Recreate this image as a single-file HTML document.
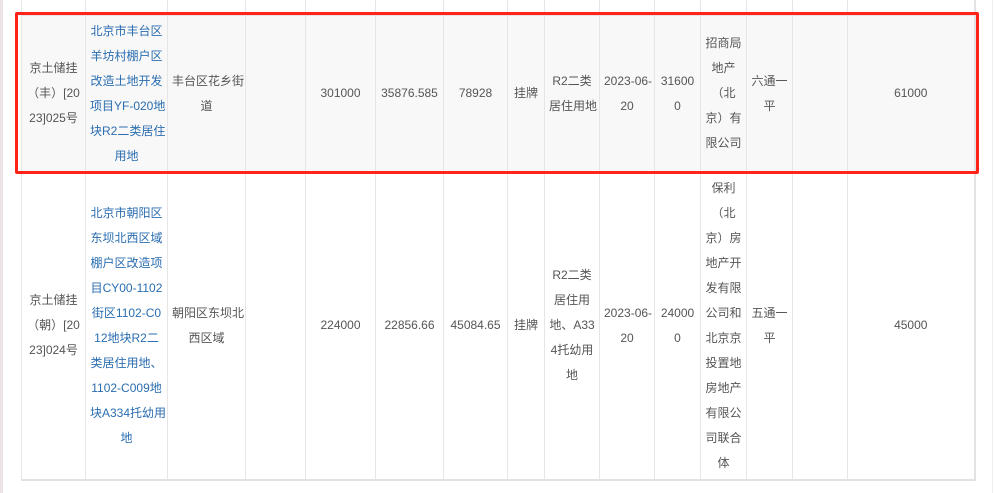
<!DOCTYPE html>
<html><head><meta charset="utf-8"><style>
html,body{margin:0;padding:0;background:#fff;width:994px;height:493px;overflow:hidden;position:relative;font-family:"Liberation Sans","Noto Sans CJK SC",sans-serif;}
.lstrip{position:absolute;left:0;top:0;width:3px;height:493px;background:#ece4e4;}
.rstrip{position:absolute;left:992px;top:0;width:1px;height:493px;background:#eee;}
table{position:absolute;left:21px;top:-11px;border-collapse:collapse;table-layout:fixed;width:953px;border-right:2px solid #e2e2e2;border-bottom:2px solid #e2e2e2;}
td{border:1px solid #e6e6e6;padding:0 4px;text-align:center;vertical-align:middle;font-size:12px;line-height:25px;color:#555;overflow:hidden;white-space:nowrap;}
td a{color:#2a6db0;text-decoration:none;}
tr.r1 td{background:#f8f8f8;height:155px;}
tr.r2 td{height:307px;}
tr.r0 td{height:25px;}
.box{position:absolute;left:15px;top:12px;width:958px;height:156px;border:3px solid #ff2318;border-radius:2px;}
</style></head><body>
<div class="lstrip"></div><div class="rstrip"></div>
<table>
<colgroup><col style="width:64px"><col style="width:82px"><col style="width:78px"><col style="width:60px"><col style="width:70px"><col style="width:68px"><col style="width:64px"><col style="width:37px"><col style="width:55px"><col style="width:55px"><col style="width:46px"><col style="width:46px"><col style="width:46px"><col style="width:55px"><col style="width:127px"></colgroup>
<tr class="r0"><td></td><td></td><td></td><td></td><td></td><td></td><td></td><td></td><td></td><td></td><td></td><td></td><td></td><td></td><td></td></tr>
<tr class="r1">
<td>京土储挂<br>（丰）[20<br>23]025号</td>
<td><a>北京市丰台区<br>羊坊村棚户区<br>改造土地开发<br>项目YF-020地<br>块R2二类居住<br>用地</a></td>
<td>丰台区花乡街<br>道</td>
<td></td>
<td>301000</td>
<td>35876.585</td>
<td>78928</td>
<td>挂牌</td>
<td>R2二类<br>居住用地</td>
<td>2023-06-<br>20</td>
<td>31600<br>0</td>
<td>招商局<br>地产<br>（北<br>京）有<br>限公司</td>
<td>六通一<br>平</td>
<td></td>
<td>61000</td>
</tr>
<tr class="r2">
<td>京土储挂<br>（朝）[20<br>23]024号</td>
<td><a>北京市朝阳区<br>东坝北西区域<br>棚户区改造项<br>目CY00-1102<br>街区1102-C0<br>12地块R2二<br>类居住用地、<br>1102-C009地<br>块A334托幼用<br>地</a></td>
<td>朝阳区东坝北<br>西区域</td>
<td></td>
<td>224000</td>
<td>22856.66</td>
<td>45084.65</td>
<td>挂牌</td>
<td>R2二类<br>居住用<br>地、A33<br>4托幼用<br>地</td>
<td>2023-06-<br>20</td>
<td>24000<br>0</td>
<td>保利<br>（北<br>京）房<br>地产开<br>发有限<br>公司和<br>北京京<br>投置地<br>房地产<br>有限公<br>司联合<br>体</td>
<td>五通一<br>平</td>
<td></td>
<td>45000</td>
</tr>
</table>
<div class="box"></div>
</body></html>
